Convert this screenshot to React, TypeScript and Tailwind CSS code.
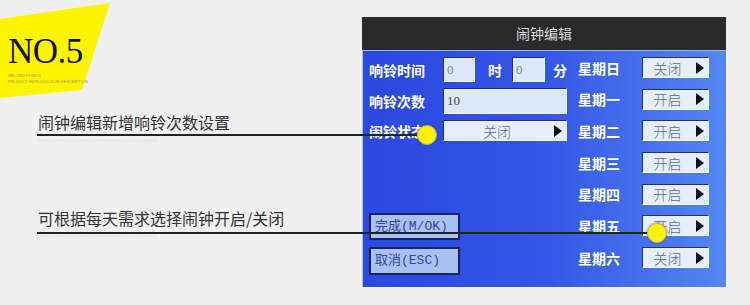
import React from 'react';

const cjk = '"Noto Sans CJK SC", "Noto Sans", sans-serif';

const weekDays: [string, string][] = [
  ['星期日', '关闭'],
  ['星期一', '开启'],
  ['星期二', '开启'],
  ['星期三', '开启'],
  ['星期四', '开启'],
  ['星期五', '开启'],
  ['星期六', '关闭'],
];

function Triangle() {
  return (
    <svg width="8" height="12" viewBox="0 0 8 12" className="shrink-0">
      <path d="M0 0 L8 6 L0 12 Z" fill="#0a0a1a" />
    </svg>
  );
}

function SelectBox({ value, className }: { value: string; className: string }) {
  return (
    <div
      className={`flex items-center border border-t-[#27306a] border-l-[#27306a] border-r-[#f4f8ff] border-b-[#f4f8ff] bg-[#e6eefb] pr-[4px] ${className}`}
    >
      <span className="flex-1 pr-[4px] text-center text-[14px] leading-none font-light text-[#5c6a86]">{value}</span>
      <Triangle />
    </div>
  );
}

function InputBox({ value, className }: { value: string; className: string }) {
  return (
    <div
      className={`flex items-center border border-t-[#27306a] border-l-[#27306a] border-r-[#f4f8ff] border-b-[#f4f8ff] bg-[#dce7f8] pl-[3px] text-[13px] text-[#7a8aa0] ${className}`}
      style={{ fontFamily: '"Liberation Serif", serif' }}
    >
      {value}
    </div>
  );
}

function Label({ children, className = '' }: { children: React.ReactNode; className?: string }) {
  return <span className={`text-[14px] font-bold leading-none text-white ${className}`}>{children}</span>;
}

function PanelButton({ children, className }: { children: React.ReactNode; className: string }) {
  return (
    <div
      className={`flex w-[91px] items-center border-2 border-[#1a2360] bg-[#abc0f2] pl-[4px] text-[13px] text-[#3344a0] ${className}`}
      style={{ fontFamily: '"Liberation Mono", "Noto Sans CJK SC", monospace' }}
    >
      {children}
    </div>
  );
}

function Badge() {
  return (
    <div className="relative h-[100px] w-[112px]">
      <svg width="112" height="100" viewBox="0 0 112 100" className="absolute left-0 top-0">
        <polygon points="0,19 110,3 82,90 0,98" fill="#fdf500" />
      </svg>
      <div className="relative pl-[8px] pt-[34px]">
        <div
          className="text-[35px] leading-none tracking-[-0.5px] text-[#111]"
          style={{ fontFamily: '"Liberation Serif", serif' }}
        >
          NO.5
        </div>
        <div className="mt-[4px] text-[4px] leading-[6px] text-[#9a9a40]" style={{ fontFamily: '"Liberation Sans", sans-serif' }}>
          <div>SELLING POINTS</div>
          <div>PRODUCT INTRODUCTION DESCRIPTION</div>
        </div>
      </div>
    </div>
  );
}

function Caption({ text }: { text: string }) {
  return (
    <div className="pl-[38px]">
      <div className="text-[16px] leading-[20px] text-[#333]" style={{ fontFamily: cjk }}>
        {text}
      </div>
      <div className="mt-[6px] w-[265px] text-[4px] leading-[5px] text-[#dedede]" style={{ fontFamily: '"Liberation Sans", sans-serif' }}>
        PRODUCT FUNCTION DESCRIPTION INTRODUCTION DETAILS
      </div>
    </div>
  );
}

function Pointer({ top, width }: { top: number; width: number }) {
  return (
    <div className="pointer-events-none absolute left-[37px]" style={{ top, width }}>
      <div className="h-[1.5px] w-full bg-[#222]" />
      <div className="absolute right-[-10px] top-[-9px] h-[20px] w-[20px] rounded-full border border-[#b9b26a] bg-[#fff200] shadow-[0_0_3px_rgba(80,80,80,0.6)]" />
    </div>
  );
}

export default function App() {
  return (
    <div className="relative flex h-[305px] w-[750px] overflow-hidden bg-[#f0f0f0]" style={{ fontFamily: cjk }}>
      <div className="w-[362px] shrink-0">
        <Badge />
        <div className="mt-[12px]">
          <Caption text="闹钟编辑新增响铃次数设置" />
        </div>
        <div className="mt-[65px]">
          <Caption text="可根据每天需求选择闹钟开启/关闭" />
        </div>
      </div>

      <div className="mt-[17px] flex h-[270px] w-[364px] flex-col">
        <div className="flex h-[33px] items-center justify-center bg-[#2a2a2a] text-[14px] text-[#dcdcdc]">
          闹钟编辑
        </div>
        <div className="h-px bg-[#9fb6f0]" />
        <div className="flex flex-1 border-l border-[#a8bdf2] bg-linear-to-r from-[#2b48e0] via-[#3455e6] to-[#5586f0]">
          <div className="relative w-[207px] shrink-0 pl-[6px] pt-[6px]">
            <div className="flex h-[25px] items-center">
              <Label className="w-[74px]">响铃时间</Label>
              <InputBox value="0" className="h-[25px] w-[32px]" />
              <Label className="ml-[13px] w-[24px]">时</Label>
              <InputBox value="0" className="h-[25px] w-[33px]" />
              <Label className="ml-[8px]">分</Label>
            </div>
            <div className="mt-[6px] flex h-[26px] items-center">
              <Label className="w-[74px]">响铃次数</Label>
              <InputBox value="10" className="h-[26px] w-[124px] text-[#444]" />
            </div>
            <div className="mt-[6px] flex h-[21px] items-center">
              <Label className="w-[74px]">闹铃状态</Label>
              <SelectBox value="关闭" className="h-[21px] w-[124px]" />
            </div>
            <PanelButton className="mt-[72px] h-[27px]">完成(M/OK)</PanelButton>
            <PanelButton className="mt-[7px] h-[28px]">取消(ESC)</PanelButton>
          </div>
          <div className="flex flex-col gap-[10.7px] pt-[6px]">
            {weekDays.map(([day, state]) => (
              <div key={day} className="flex h-[21px] items-center">
                <Label className="ml-[8px] w-[64px]">{day}</Label>
                <SelectBox value={state} className="h-[21px] w-[67px]" />
              </div>
            ))}
          </div>
        </div>
      </div>

      <Pointer top={134} width={390} />
      <Pointer top={232} width={620} />
    </div>
  );
}
